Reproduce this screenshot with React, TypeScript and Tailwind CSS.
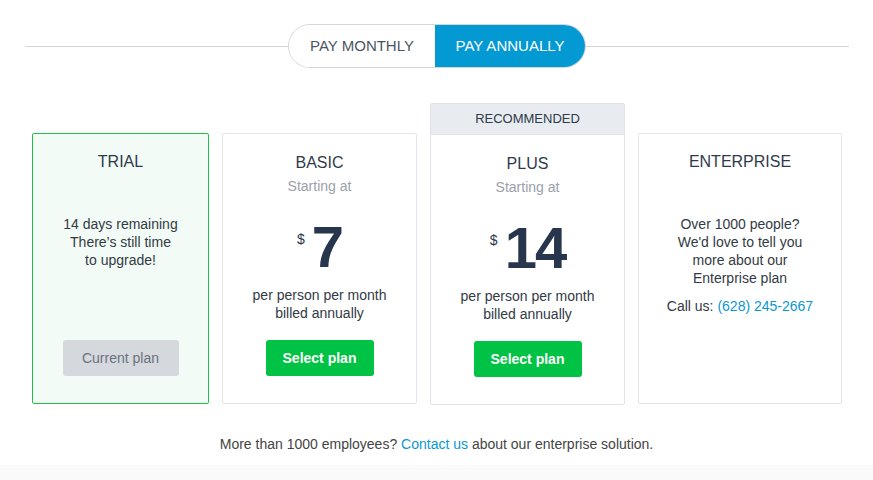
import React from 'react'

const font = { fontFamily: '"Liberation Sans", Arial, sans-serif' }

type Plan = {
  name: string;
  price: string;
}

const plans: Plan[] = [
  { name: 'BASIC', price: '7' },
  { name: 'PLUS', price: '14' },
]

const PriceBody = ({ plan }: { plan: Plan }) => (
  <div className="flex-1 flex flex-col items-center pt-[19px]">
    <div className="text-[16px] leading-5 text-[#2f3a4b]">{plan.name}</div>
    <div className="mt-[4px] text-[14px] leading-[18px] text-[#9aa1aa]">Starting at</div>
    <div className="mt-[28px] flex items-start h-[48px] text-[#27364d]">
      <span className="text-[14px] leading-4 mt-[8px] mr-[7px]">$</span>
      <span className="text-[58px] leading-[48px] font-bold tracking-[-2px]">{plan.price}</span>
    </div>
    <div className="mt-[15px] text-[14px] leading-[18px] text-[#333a45] text-center">
      per person per month
      <br />
      billed annually
    </div>
    <button className="mt-[18px] w-[108px] h-[36px] rounded-[3px] bg-[#00c244] text-white text-[14px] font-bold">
      Select plan
    </button>
  </div>
)

const App = () => {
  return (
    <div className="w-[873px] h-[480px] bg-white flex flex-col" style={font}>
      {/* billing toggle */}
      <div className="flex items-center pl-[25px] pr-[24px] mt-[24px]">
        <div className="flex-1 h-px bg-[#d6d6d6]" />
        <div className="flex h-[44px] rounded-full border border-[#d6d6d6] overflow-hidden text-[15px]">
          <button className="w-[146px] bg-white text-[#4b5566]">PAY MONTHLY</button>
          <button className="w-[150px] bg-[#0399d2] text-white">PAY ANNUALLY</button>
        </div>
        <div className="flex-1 h-px bg-[#d6d6d6]" />
      </div>

      {/* plans */}
      <div className="flex items-start gap-[13px] pl-[32px] mt-[35px]">
        <div className="mt-[30px] w-[177px] h-[271px] border border-[#1ec24a] rounded-[2px] bg-[#f2fbf6] flex flex-col items-center pt-[18px]">
          <div className="text-[16px] leading-5 text-[#2f3a4b]">TRIAL</div>
          <div className="mt-[43px] text-[14px] leading-[18px] text-[#333a45] text-center">
            14 days remaining
            <br />
            There’s still time
            <br />
            to upgrade!
          </div>
          <button className="mt-[71px] w-[116px] h-[36px] rounded-[3px] bg-[#d5d8dc] text-[#6b7380] text-[14px]">
            Current plan
          </button>
        </div>

        <div className="mt-[30px] w-[195px] h-[271px] border border-[#e3e5e8] rounded-[2px] bg-white flex flex-col">
          <PriceBody plan={plans[0]} />
        </div>

        <div className="w-[195px] h-[302px] border border-[#e0e3e7] rounded-[2px] bg-white overflow-hidden flex flex-col">
          <div className="h-[31px] shrink-0 bg-[#e8ebef] border-b border-[#e0e3e7] flex items-center justify-center text-[13px] text-[#2f3a4b]">
            RECOMMENDED
          </div>
          <PriceBody plan={plans[1]} />
        </div>

        <div className="mt-[30px] w-[204px] h-[271px] border border-[#e3e5e8] rounded-[2px] bg-white flex flex-col items-center pt-[18px]">
          <div className="text-[16px] leading-5 text-[#2f3a4b]">ENTERPRISE</div>
          <div className="mt-[43px] text-[14px] leading-[18px] text-[#333a45] text-center">
            Over 1000 people?
            <br />
            We'd love to tell you
            <br />
            more about our
            <br />
            Enterprise plan
          </div>
          <div className="mt-[10px] text-[14px] leading-[18px] text-[#333a45]">
            Call us: <a href="/" className="text-[#0a98d0]">(628) 245-2667</a>
          </div>
        </div>
      </div>

      {/* footer */}
      <div className="mt-[30px] text-center text-[14px] leading-[18px] text-[#444]">
        More than 1000 employees? <a href="/" className="text-[#0a98d0]">Contact us</a> about our enterprise solution.
      </div>
      <div className="flex-1 mt-[12px] bg-[#fafafa]" />
    </div>
  )
}

export default App
